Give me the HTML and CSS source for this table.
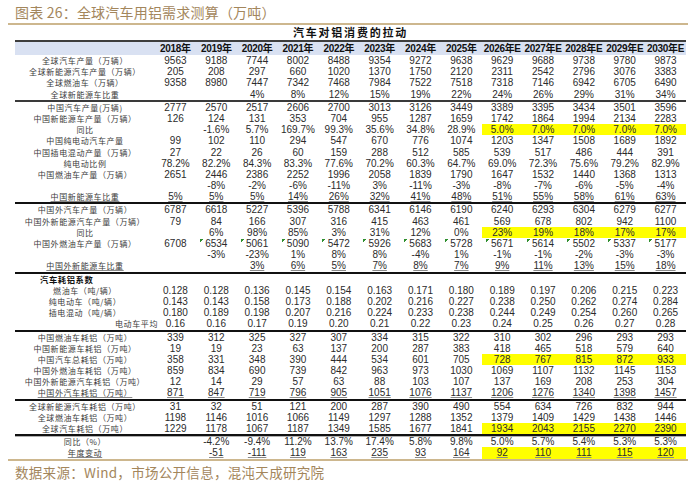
FILE: index.html
```html
<!DOCTYPE html>
<html lang="zh">
<head>
<meta charset="utf-8">
<title>全球汽车用铝需求测算</title>
<link rel="stylesheet" href="styles.css">
</head>
<body>
<div class="page">
  <h1 class="title">图表 26：全球汽车用铝需求测算（万吨）</h1>
  <div class="rule"></div>
  <div class="sheet">
    <div class="caption">汽车对铝消费的拉动</div>
    <div class="row head"><span></span><span>2018年</span><span>2019年</span><span>2020年</span><span>2021年</span><span>2022年</span><span>2023年</span><span>2024年</span><span>2025年</span><span>2026年E</span><span>2027年E</span><span>2028年E</span><span>2029年E</span><span>2030年E</span></div>

    <div class="row"><span class="lb">全球汽车产量（万辆）</span><span>9563</span><span>9188</span><span>7744</span><span>8002</span><span>8488</span><span>9354</span><span>9272</span><span>9638</span><span>9629</span><span>9688</span><span>9738</span><span>9780</span><span>9873</span></div>
    <div class="row"><span class="lb">全球新能源汽车产量（万辆）</span><span>205</span><span>208</span><span>297</span><span>660</span><span>1020</span><span>1370</span><span>1750</span><span>2120</span><span>2311</span><span>2542</span><span>2796</span><span>3076</span><span>3383</span></div>
    <div class="row"><span class="lb">全球燃油车（万辆）</span><span>9358</span><span>8980</span><span>7447</span><span>7342</span><span>7468</span><span>7984</span><span>7522</span><span>7518</span><span>7318</span><span>7146</span><span>6942</span><span>6705</span><span>6490</span></div>
    <div class="row"><span class="lb">全球新能源车比重</span><span></span><span></span><span>4%</span><span>8%</span><span>12%</span><span>15%</span><span>19%</span><span>22%</span><span>24%</span><span>26%</span><span>29%</span><span>31%</span><span>34%</span></div>
    <div class="sep soft"></div>

    <div class="row"><span class="lb">中国汽车产量(万辆)</span><span>2777</span><span>2570</span><span>2517</span><span>2606</span><span>2700</span><span>3013</span><span>3126</span><span>3449</span><span>3389</span><span>3395</span><span>3434</span><span>3501</span><span>3596</span></div>
    <div class="row"><span class="lb">中国新能源车产量（万辆）</span><span>126</span><span>124</span><span>131</span><span>353</span><span>704</span><span>955</span><span>1287</span><span>1659</span><span>1742</span><span>1864</span><span>1994</span><span>2134</span><span>2283</span></div>
    <div class="row"><span class="lb">同比</span><span></span><span>-1.6%</span><span>5.7%</span><span>169.7%</span><span>99.3%</span><span>35.6%</span><span>34.8%</span><span>28.9%</span><span class="hl">5.0%</span><span class="hl">7.0%</span><span class="hl">7.0%</span><span class="hl">7.0%</span><span class="hl">7.0%</span></div>
    <div class="row"><span class="lb">中国纯电动汽车产量</span><span>99</span><span>102</span><span>110</span><span>294</span><span>547</span><span>670</span><span>776</span><span>1074</span><span>1203</span><span>1347</span><span>1508</span><span>1689</span><span>1892</span></div>
    <div class="row"><span class="lb">中国插电混动产量（万辆）</span><span>27</span><span>22</span><span>26</span><span>60</span><span>159</span><span>288</span><span>512</span><span>585</span><span>539</span><span>517</span><span>486</span><span>444</span><span>391</span></div>
    <div class="row"><span class="lb">纯电动比例</span><span>78.2%</span><span>82.2%</span><span>84.3%</span><span>83.3%</span><span>77.6%</span><span>70.2%</span><span>60.3%</span><span>64.7%</span><span>69.0%</span><span>72.3%</span><span>75.6%</span><span>79.2%</span><span>82.9%</span></div>
    <div class="row"><span class="lb">中国燃油车产量（万辆）</span><span>2651</span><span>2446</span><span>2386</span><span>2252</span><span>1996</span><span>2058</span><span>1839</span><span>1790</span><span>1647</span><span>1532</span><span>1440</span><span>1368</span><span>1313</span></div>
    <div class="row"><span class="lb"></span><span></span><span>-8%</span><span>-2%</span><span>-6%</span><span>-11%</span><span>3%</span><span>-11%</span><span>-3%</span><span>-8%</span><span>-7%</span><span>-6%</span><span>-5%</span><span>-4%</span></div>
    <div class="row ul"><span class="lb">中国新能源车比重</span><span>5%</span><span>5%</span><span>5%</span><span>14%</span><span>26%</span><span>32%</span><span>41%</span><span>48%</span><span>51%</span><span>55%</span><span>58%</span><span>61%</span><span>63%</span></div>
    <div class="sep"></div>

    <div class="row"><span class="lb">中国外汽车产量（万辆）</span><span>6787</span><span>6618</span><span>5227</span><span>5396</span><span>5788</span><span>6341</span><span>6146</span><span>6190</span><span>6240</span><span>6293</span><span>6304</span><span>6279</span><span>6277</span></div>
    <div class="row"><span class="lb">中国外新能源汽车产量（万辆）</span><span>79</span><span>84</span><span>166</span><span>307</span><span>316</span><span>415</span><span>463</span><span>461</span><span>569</span><span>678</span><span>802</span><span>942</span><span>1100</span></div>
    <div class="row"><span class="lb">同比</span><span></span><span>6%</span><span>98%</span><span>85%</span><span>3%</span><span>31%</span><span>12%</span><span>0%</span><span class="hl">23%</span><span class="hl">19%</span><span class="hl">18%</span><span class="hl">17%</span><span class="hl">17%</span></div>
    <div class="row"><span class="lb">中国外燃油车产量（万辆）</span><span>6708</span><span class="tri">6534</span><span class="tri">5061</span><span class="tri">5090</span><span class="tri">5472</span><span class="tri">5926</span><span class="tri">5683</span><span class="tri">5728</span><span class="tri">5671</span><span class="tri">5614</span><span class="tri">5502</span><span class="tri">5337</span><span class="tri">5177</span></div>
    <div class="row"><span class="lb"></span><span></span><span>-3%</span><span>-23%</span><span>1%</span><span>8%</span><span>8%</span><span>-4%</span><span>1%</span><span>-1%</span><span>-1%</span><span>-2%</span><span>-3%</span><span>-3%</span></div>
    <div class="row ul"><span class="lb">中国外新能源车比重</span><span></span><span></span><span>3%</span><span>6%</span><span>5%</span><span>7%</span><span>8%</span><span>7%</span><span>9%</span><span>11%</span><span>13%</span><span>15%</span><span>18%</span></div>
    <div class="sep"></div>

    <div class="row"><span class="lb group">汽车耗铝系数</span></div>
    <div class="row"><span class="lb">燃油车（吨/辆）</span><span>0.128</span><span>0.128</span><span>0.136</span><span>0.145</span><span>0.154</span><span>0.163</span><span>0.171</span><span>0.180</span><span>0.189</span><span>0.197</span><span>0.206</span><span>0.215</span><span>0.223</span></div>
    <div class="row"><span class="lb">纯电动车（吨/辆）</span><span>0.143</span><span>0.143</span><span>0.158</span><span>0.173</span><span>0.188</span><span>0.202</span><span>0.216</span><span>0.227</span><span>0.238</span><span>0.250</span><span>0.262</span><span>0.274</span><span>0.284</span></div>
    <div class="row"><span class="lb">插电混动（吨/辆）</span><span>0.180</span><span>0.189</span><span>0.198</span><span>0.207</span><span>0.216</span><span>0.224</span><span>0.233</span><span>0.238</span><span>0.244</span><span>0.249</span><span>0.254</span><span>0.260</span><span>0.265</span></div>
    <div class="row"><span class="lb right">电动车平均</span><span>0.16</span><span>0.16</span><span>0.17</span><span>0.19</span><span>0.20</span><span>0.21</span><span>0.22</span><span>0.23</span><span>0.24</span><span>0.25</span><span>0.26</span><span>0.27</span><span>0.28</span></div>
    <div class="sep"></div>

    <div class="row"><span class="lb">中国燃油车耗铝（万吨）</span><span>339</span><span>312</span><span>325</span><span>327</span><span>307</span><span>334</span><span>315</span><span>322</span><span>310</span><span>302</span><span>296</span><span>293</span><span>293</span></div>
    <div class="row"><span class="lb">中国新能源车耗铝（万吨）</span><span>19</span><span>19</span><span>23</span><span>63</span><span>137</span><span>200</span><span>287</span><span>383</span><span>418</span><span>465</span><span>518</span><span>579</span><span>640</span></div>
    <div class="row"><span class="lb">中国汽车总耗铝（万吨）</span><span>358</span><span>331</span><span>348</span><span>390</span><span>444</span><span>534</span><span>601</span><span>705</span><span class="hl">728</span><span class="hl">767</span><span class="hl">815</span><span class="hl">872</span><span class="hl">933</span></div>
    <div class="row"><span class="lb">中国外燃油车耗铝（万吨）</span><span>859</span><span>834</span><span>690</span><span>739</span><span>842</span><span>963</span><span>973</span><span>1030</span><span>1069</span><span>1107</span><span>1132</span><span>1145</span><span>1153</span></div>
    <div class="row"><span class="lb">中国外新能源汽车耗铝（万吨）</span><span>12</span><span>14</span><span>29</span><span>57</span><span>63</span><span>88</span><span>103</span><span>107</span><span>137</span><span>169</span><span>208</span><span>253</span><span>304</span></div>
    <div class="row ul"><span class="lb">中国外汽车耗铝（万吨）</span><span>871</span><span>847</span><span>719</span><span>796</span><span>905</span><span>1051</span><span>1076</span><span>1137</span><span>1206</span><span>1276</span><span>1340</span><span>1398</span><span>1457</span></div>
    <div class="sep"></div>

    <div class="row"><span class="lb">全球新能源汽车耗铝（万吨）</span><span>31</span><span>32</span><span>51</span><span>121</span><span>200</span><span>287</span><span>390</span><span>490</span><span>554</span><span>634</span><span>726</span><span>832</span><span>944</span></div>
    <div class="row"><span class="lb">全球燃油车耗铝（万吨）</span><span>1198</span><span>1146</span><span>1016</span><span>1066</span><span>1149</span><span>1297</span><span>1288</span><span>1352</span><span>1379</span><span>1409</span><span>1429</span><span>1438</span><span>1446</span></div>
    <div class="row"><span class="lb">全球汽车耗铝（万吨）</span><span>1229</span><span>1178</span><span>1067</span><span>1187</span><span>1349</span><span>1585</span><span>1677</span><span>1841</span><span class="hl">1934</span><span class="hl">2043</span><span class="hl">2155</span><span class="hl">2270</span><span class="hl">2390</span></div>
    <div class="sep"></div>

    <div class="row topline"><span class="lb">同比（%）</span><span></span><span>-4.2%</span><span>-9.4%</span><span>11.2%</span><span>13.7%</span><span>17.4%</span><span>5.8%</span><span>9.8%</span><span>5.0%</span><span>5.7%</span><span>5.4%</span><span>5.3%</span><span>5.3%</span></div>
    <div class="row ul"><span class="lb">年度变动</span><span></span><span>-51</span><span>-111</span><span>119</span><span>163</span><span>235</span><span>93</span><span>164</span><span class="hl">92</span><span class="hl">110</span><span class="hl">111</span><span class="hl">115</span><span class="hl">120</span></div>
  </div>
  <div class="rule"></div>
  <p class="source">数据来源：Wind，市场公开信息，混沌天成研究院</p>
</div>
</body>
</html>
```

FILE: styles.css
```css
* {
  box-sizing: border-box;
  margin: 0;
  padding: 0;
}

html,
body {
  background: #ffffff;
}

body {
  width: 698px;
  height: 484px;
  overflow: hidden;
  font-family: "Liberation Sans", "Noto Sans CJK SC", sans-serif;
  color: #2b2b2b;
}

.page {
  padding: 3px 10px 0 8px;
}

.title {
  font: 400 14px/18px "Noto Sans CJK SC", sans-serif;
  color: #a3865c;
  padding-left: 7px;
  margin-bottom: 2px;
  letter-spacing: 0.2px;
}

.rule {
  width: 680px;
  height: 2px;
  background: #cdb78e;
}

.sheet {
  margin-left: 7px;
  width: 671px;
}

.caption {
  height: 15px;
  font: 700 11px/15px "Noto Sans CJK SC", sans-serif;
  letter-spacing: 1.8px;
  text-align: center;
  color: #111111;
}

.row {
  display: grid;
  grid-template-columns: 140px repeat(13, 1fr);
  height: 11.2px;
  line-height: 11.2px;
  font-size: 10px;
  text-align: center;
  white-space: nowrap;
}

.row > span {
  display: block;
  height: 100%;
}

.lb {
  font-family: "Noto Sans CJK SC", sans-serif;
  font-size: 8px;
  letter-spacing: 0.6px;
  color: #3a3a3a;
}

.lb.group {
  text-align: left;
  padding-left: 25px;
  font-weight: 700;
  font-size: 8.3px;
  color: #111111;
}

.lb.right {
  text-align: right;
  margin-right: -3px;
}

.head {
  height: 15px;
  line-height: 13px;
  border-top: 2px solid #3d3d3d;
  background: #d9e1f2;
  font-weight: 700;
  font-size: 10px;
  letter-spacing: -0.3px;
  color: #111111;
}

.sep {
  height: 2px;
  background: #111111;
}

.sep.soft {
  background: #3a3a3a;
}

.hl {
  background: #ffff00;
}

.tri {
  background: linear-gradient(135deg, #2f8f2f 50%, transparent 50%) 4px 1px / 4px 4px no-repeat;
}

.ul > span {
  text-decoration: underline;
  text-decoration-color: #8a8a8a;
  text-underline-offset: 1px;
}

.topline {
  box-shadow: inset 0 1px #b0b0b0;
}

.source {
  margin-top: 2px;
  padding-left: 7px;
  font: 400 13.5px/18px "Noto Sans CJK SC", sans-serif;
  letter-spacing: 0.3px;
  color: #a3865c;
}
```
